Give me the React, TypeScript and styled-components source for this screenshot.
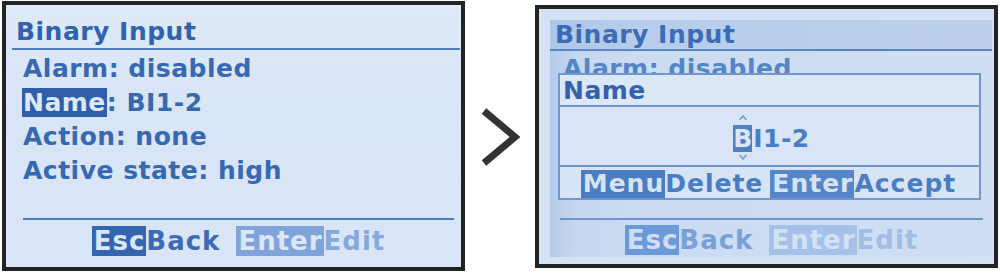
import React from "react";
import styled, { createGlobalStyle, css } from "styled-components";

const FONT = `"DejaVu Sans", Verdana, sans-serif`;

const Global = createGlobalStyle`
  * { box-sizing: border-box; }
  body { margin: 0; background: #ffffff; font-family: ${FONT}; }
`;

const Stage = styled.div`
  display: flex;
  align-items: flex-start;
  width: 1000px;
  height: 273px;
  overflow: hidden;
`;

const lcdText = css`
  font-family: ${FONT};
  font-weight: bold;
  font-size: 25px;
  letter-spacing: 0.5px;
  white-space: nowrap;
`;

/* ---------- left screen ---------- */

const LeftScreen = styled.div`
  margin: 1px 0 0 2px;
  width: 463px;
  height: 270px;
  border: 4px solid #232323;
  background: linear-gradient(180deg, #dfe9f8 0%, #d8e5f6 40%, #dae6f7 100%);
  display: flex;
  flex-direction: column;
`;

const Header = styled.div<{ $band?: boolean }>`
  ${lcdText};
  line-height: 29px;
  color: ${(p) => (p.$band ? "#3a6db5" : "#2f63ae")};
  border-bottom: 2px solid ${(p) => (p.$band ? "#5a87c6" : "#4f7fc2")};
  margin: ${(p) => (p.$band ? "0" : "0 1px 0 6px")};
  padding: ${(p) => (p.$band ? "0 0 0 5px" : "12px 0 2px 4px")};
  background: ${(p) =>
    p.$band ? "linear-gradient(90deg, #aec6e8 0%, #b7cdeb 20%, #bcd0ec 100%)" : "transparent"};
`;

const Rows = styled.div<{ $pad: number; $top: number }>`
  flex: 1;
  padding: ${(p) => p.$top}px 0 0 ${(p) => p.$pad}px;
`;

const Row = styled.div<{ $faded?: boolean }>`
  ${lcdText};
  height: 34px;
  line-height: 34px;
  color: ${(p) => (p.$faded ? "#5485c7" : "#3769b3")};
`;

const Selected = styled.span`
  background: #2f5fa9;
  color: #dce7f7;
  padding: 0 1px 0 1px;
  margin-left: -1px;
`;

const Footer = styled.div<{ $h: number; $ml: number; $mr: number; $line: string; $pt: number }>`
  height: ${(p) => p.$h}px;
  margin: 0 ${(p) => p.$mr}px 0 ${(p) => p.$ml}px;
  border-top: 2px solid ${(p) => p.$line};
  padding-top: ${(p) => p.$pt}px;
  display: flex;
  justify-content: center;
  align-items: flex-start;
  gap: 16px;
`;

const Group = styled.div`
  display: flex;
  align-items: flex-start;
`;

const Key = styled.span<{ $bg: string; $fg: string; $h?: number; $fs?: number }>`
  ${lcdText};
  font-size: ${(p) => p.$fs ?? 26}px;
  letter-spacing: 1px;
  height: ${(p) => p.$h ?? 30}px;
  line-height: ${(p) => p.$h ?? 30}px;
  padding: 0 1px 0 2px;
  background: ${(p) => p.$bg};
  color: ${(p) => p.$fg};
`;

const Label = styled.span<{ $fg: string; $h?: number; $fs?: number }>`
  ${lcdText};
  font-size: ${(p) => p.$fs ?? 26}px;
  letter-spacing: 1px;
  line-height: ${(p) => p.$h ?? 30}px;
  color: ${(p) => p.$fg};
`;

/* ---------- divider ---------- */

const Divider = styled.div`
  width: 70px;
  height: 273px;
  display: flex;
  align-items: center;
  justify-content: center;
`;

/* ---------- right screen ---------- */

const RightScreen = styled.div`
  margin-top: 5px;
  width: 463px;
  height: 263px;
  border: 4px solid #232323;
  background: #d5e2f4;
  padding: 11px 2px 7px 11px;
`;

const Panel = styled.div`
  position: relative;
  height: 100%;
  display: flex;
  flex-direction: column;
  background: linear-gradient(90deg, #b4cae9 0%, #c4d7ef 6%, #cbdcf2 20%, #cfdef3 100%);
`;

const Dialog = styled.div`
  position: absolute;
  left: 8px;
  top: 53px;
  width: 423px;
  height: 127px;
  border: 2px solid #7196cf;
  background: #d9e5f6;
  display: flex;
  flex-direction: column;
`;

const DialogTitle = styled.div`
  ${lcdText};
  height: 32px;
  line-height: 29px;
  padding: 1px 0 0 3px;
  color: #3462ac;
  background: #dce7f7;
  border-bottom: 2px solid #7196cf;
`;

const DialogValue = styled.div`
  flex: 1;
  display: flex;
  align-items: center;
  justify-content: center;
  padding: 4px 0 0 4px;
`;

const ValueText = styled.span`
  ${lcdText};
  line-height: 29px;
  color: #4a7dc3;
`;

const Cursor = styled.span`
  position: relative;
  display: inline-block;
  height: 27px;
  line-height: 27px;
  padding: 0;
  margin-right: 1px;
  letter-spacing: 0;
  background: #4e80c6;
  color: #dbe6f7;
`;

const Arrow = styled.svg<{ $down?: boolean }>`
  position: absolute;
  left: 50%;
  margin-left: -4px;
  ${(p) => (p.$down ? "bottom: -8px;" : "top: -10px;")}
`;

const DialogFooter = styled.div`
  height: 33px;
  border-top: 2px solid #7196cf;
  background: #d7e4f5;
  display: flex;
  justify-content: center;
  align-items: flex-end;
  gap: 7px;
  padding: 0 2px 0 0;
`;

export default function App() {
  return (
    <>
      <Global />
      <Stage>
        <LeftScreen>
          <Header>Binary Input</Header>
          <Rows $pad={17} $top={2}>
            <Row>Alarm: disabled</Row>
            <Row>
              <Selected>Name</Selected>: BI1-2
            </Row>
            <Row>Action: none</Row>
            <Row>Active state: high</Row>
          </Rows>
          <Footer $h={49} $pt={6} $ml={17} $mr={7} $line="#4f7fc2">
            <Group>
              <Key $bg="#3466b0" $fg="#dbe6f7">Esc</Key>
              <Label $fg="#3a6cb5">Back</Label>
            </Group>
            <Group>
              <Key $bg="#80a4d9" $fg="#dbe6f7">Enter</Key>
              <Label $fg="#86a9db">Edit</Label>
            </Group>
          </Footer>
        </LeftScreen>

        <Divider>
          <svg width="44" height="64" viewBox="0 0 44 64" aria-hidden="true">
            <polyline
              points="6,6 37,32 6,58"
              fill="none"
              stroke="#333333"
              strokeWidth="7"
              strokeLinejoin="miter"
              strokeLinecap="butt"
            />
          </svg>
        </Divider>

        <RightScreen>
          <Panel>
            <Header $band>Binary Input</Header>
            <Rows $pad={13} $top={1}>
              <Row $faded>Alarm: disabled</Row>
            </Rows>
            <Dialog>
              <DialogTitle>Name</DialogTitle>
              <DialogValue>
                <ValueText>
                  <Cursor>
                    <Arrow width="8" height="6" viewBox="0 0 8 6">
                      <polyline points="0.5,5 4,1 7.5,5" fill="none" stroke="#6f96cf" strokeWidth="1.4" />
                    </Arrow>
                    B
                    <Arrow $down width="8" height="6" viewBox="0 0 8 6">
                      <polyline points="0.5,1 4,5 7.5,1" fill="none" stroke="#6f96cf" strokeWidth="1.4" />
                    </Arrow>
                  </Cursor>
                  I1-2
                </ValueText>
              </DialogValue>
              <DialogFooter>
                <Group>
                  <Key $bg="#4b7dc4" $fg="#d6e3f5" $h={28} $fs={25}>Menu</Key>
                  <Label $fg="#4a7dc3" $h={28} $fs={25}>Delete</Label>
                </Group>
                <Group>
                  <Key $bg="#5686c9" $fg="#d6e3f5" $h={28} $fs={25}>Enter</Key>
                  <Label $fg="#4a7dc3" $h={28} $fs={25}>Accept</Label>
                </Group>
              </DialogFooter>
            </Dialog>
            <Footer $h={39} $pt={5} $ml={10} $mr={9} $line="#6e94cd">
              <Group>
                <Key $bg="#6c99d7" $fg="#cfdef3">Esc</Key>
                <Label $fg="#79a1d9">Back</Label>
              </Group>
              <Group>
                <Key $bg="#a5c1e7" $fg="#d3e1f4">Enter</Key>
                <Label $fg="#a0bde5">Edit</Label>
              </Group>
            </Footer>
          </Panel>
        </RightScreen>
      </Stage>
    </>
  );
}
